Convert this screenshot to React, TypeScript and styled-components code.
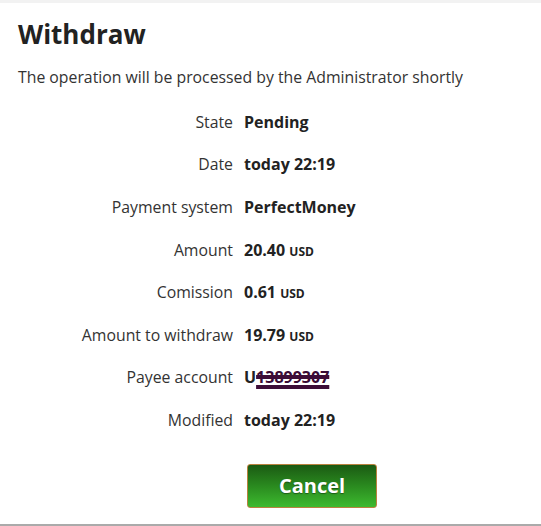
import React from "react";
import styled, {createGlobalStyle} from "styled-components";

const GlobalStyle = createGlobalStyle`
    html, body {
        margin: 0;
        padding: 0;
        background: #fff;
    }
    body {
        font-family: "Open Sans", "Liberation Sans", sans-serif;
        color: #333;
    }
`;

type Row = {
    label: string;
    value: React.ReactNode;
};

const App: React.FC = () => {
    // built here so the styled parts below are already defined
    const rows: Row[] = [
        {label: "State", value: "Pending"},
        {label: "Date", value: "today 22:19"},
        {label: "Payment system", value: "PerfectMoney"},
        {label: "Amount", value: <>20.40 <Currency>USD</Currency></>},
        {label: "Comission", value: <>0.61 <Currency>USD</Currency></>},
        {label: "Amount to withdraw", value: <>19.79 <Currency>USD</Currency></>},
        {label: "Payee account", value: <>U<Hidden>13899307</Hidden></>},
        {label: "Modified", value: "today 22:19"},
    ];

    return (
        <>
            <GlobalStyle/>
            <Page>
                <TopStrip/>
                <Dialog>
                    <Title>Withdraw</Title>
                    <Note>The operation will be processed by the Administrator shortly</Note>
                    <InfoGrid>
                        {rows.map((r) => (
                            <React.Fragment key={r.label}>
                                <Label>{r.label}</Label>
                                <Value>{r.value}</Value>
                            </React.Fragment>
                        ))}
                    </InfoGrid>
                    <Actions>
                        <CancelButton>Cancel</CancelButton>
                    </Actions>
                </Dialog>
                <BottomLine/>
            </Page>
        </>
    );
}

const Page = styled.div`
    width: 541px;
    height: 526px;
    display: flex;
    flex-direction: column;
    background: #fff;
    overflow: hidden;
`;

const TopStrip = styled.div`
    height: 3px;
    background: #f2f2f2;
    flex-shrink: 0;
`;

const Dialog = styled.div`
    flex: 1;
    padding: 13px 18px 0 18px;
    display: flex;
    flex-direction: column;
`;

const Title = styled.h1`
    margin: 0;
    font-size: 26px;
    line-height: 36px;
    font-weight: 700;
    color: #222;
`;

const Note = styled.p`
    margin: 14px 0 0 0;
    font-size: 15.8px;
    line-height: 22px;
    color: #333;
`;

const InfoGrid = styled.div`
    display: grid;
    grid-template-columns: 215px auto;
    column-gap: 11px;
    row-gap: 0;
    margin-top: 12.5px;
    grid-auto-rows: 42.6px;
    align-items: center;
`;

const Label = styled.div`
    text-align: right;
    font-size: 15.8px;
    color: #333;
`;

const Value = styled.div`
    font-size: 16px;
    font-weight: 700;
    color: #222;
`;

const Currency = styled.span`
    font-size: 12px;
    font-weight: 700;
    text-transform: uppercase;
`;

const Hidden = styled.span`
    color: #3a0a35;
    text-decoration: underline line-through;
    text-decoration-thickness: 4px;
    text-decoration-color: #3d0d38;
`;

const Actions = styled.div`
    display: flex;
    justify-content: flex-start;
    padding-left: 229px;
    margin-top: 23px;
`;

const CancelButton = styled.button`
    width: 130px;
    height: 44px;
    padding: 0 0 2px 0;
    border: 1px solid #b9823f;
    border-radius: 3px;
    background: linear-gradient(to bottom, #1b5a13 0%, #2a8a1f 50%, #3dba2f 100%);
    color: #fff;
    font-family: "Open Sans", "Liberation Sans", sans-serif;
    font-size: 20px;
    font-weight: 700;
    text-shadow: 0 1px 1px rgba(0, 0, 0, 0.4);
    cursor: pointer;
`;

const BottomLine = styled.div`
    height: 2px;
    background: #aaa;
    flex-shrink: 0;
`;

export default App;
